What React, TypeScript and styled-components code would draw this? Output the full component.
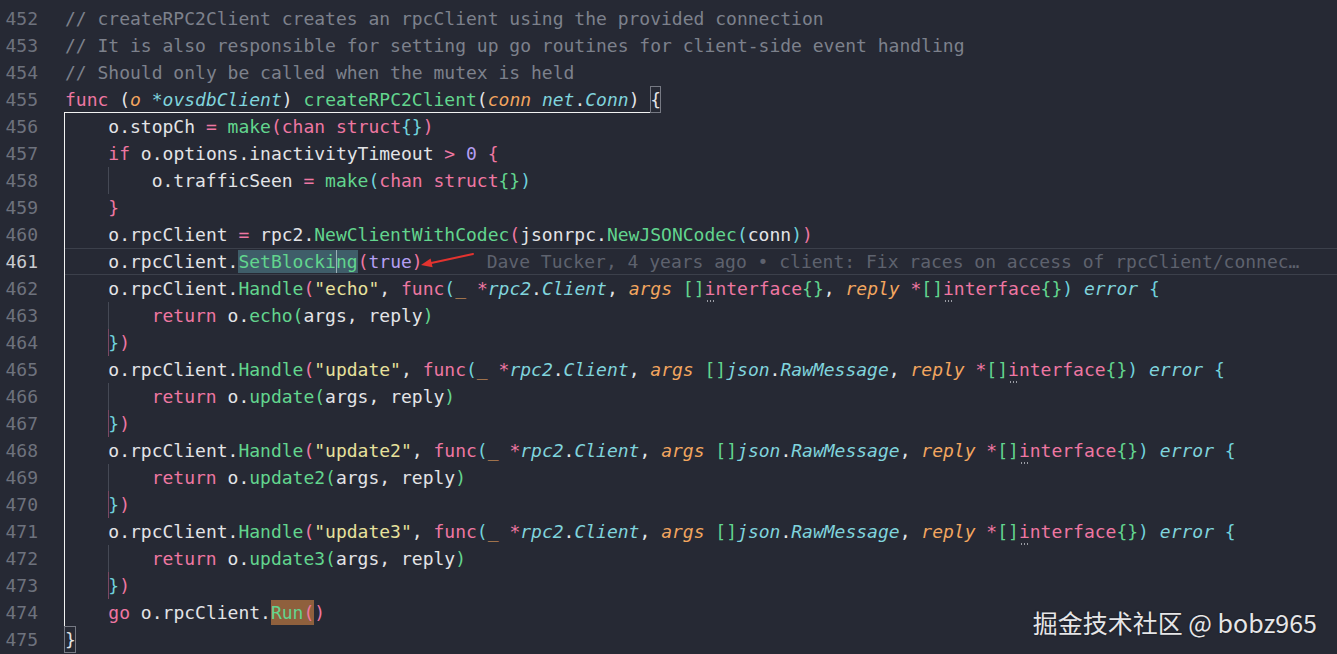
import React from "react";
import styled, { createGlobalStyle, css } from "styled-components";

const C = {
  bg: "#262934",
  text: "#e3e4e7",
  comment: "#7d818c",
  kw: "#ee77a2",
  fn: "#62d58e",
  param: "#f3a65f",
  type: "#80d4dd",
  str: "#e7e19c",
  num: "#b59ff2",
  b1: "#e3e4e7",
  b2: "#ee77a2",
  b3: "#70d2dc",
  b4: "#62d58e",
  lineNo: "#6e727d",
  lineNoActive: "#c9cbd0",
  guide: "#454955",
  guidePink: "#7a4862",
  rowBorder: "#3c404b",
  blame: "#5e626e",
};

type Kind = "t" | "c" | "k" | "f" | "p" | "y" | "s" | "n" | "b1" | "b2" | "b3" | "b4";

const GlobalStyle = createGlobalStyle`
  html, body { margin: 0; padding: 0; background: ${C.bg}; overflow: hidden; }
  #root { height: 100vh; }
`;

const Editor = styled.div`
  position: relative;
  height: 654px;
  padding-top: 5px;
  box-sizing: border-box;
  background: ${C.bg};
  font-family: "DejaVu Sans Mono", "Liberation Mono", monospace;
  font-size: 18px;
  color: ${C.text};
  display: flex;
  flex-direction: column;
`;

const Row = styled.div`
  display: grid;
  grid-template-columns: 64px 1fr;
  height: 27px;
  line-height: 27px;
`;

const Gutter = styled.div<{ $active?: boolean }>`
  text-align: right;
  padding-right: 26px;
  color: ${(p) => (p.$active ? C.lineNoActive : C.lineNo)};
`;

const Code = styled.div<{ $guide?: boolean; $current?: boolean }>`
  position: relative;
  white-space: pre;
  padding-left: 1px;
  ${(p) => {
    const shadows: string[] = [];
    if (p.$guide) shadows.push("inset 1px 0 0 #f2f2f2");
    if (p.$current) shadows.push(`inset 0 1px 0 ${C.rowBorder}`, `inset 0 -1px 0 ${C.rowBorder}`);
    return shadows.length ? css`box-shadow: ${shadows.join(", ")};` : "";
  }}
`;

const Indent = styled.span<{ $guide?: boolean }>`
  display: inline-block;
  width: 43.35px;
  height: 27px;
  vertical-align: top;
  ${(p) => p.$guide && css`box-shadow: inset 1px 0 0 ${C.guide};`}
`;

const CloseGuide = styled.span`
  display: inline-block;
  width: 0;
  height: 27px;
  vertical-align: top;
  border-left: 1px solid ${C.guidePink};
  margin-right: -1px;
`;

const colorOf = (k: Kind) =>
  ({
    t: C.text,
    c: C.comment,
    k: C.kw,
    f: C.fn,
    p: C.param,
    y: C.type,
    s: C.str,
    n: C.num,
    b1: C.b1,
    b2: C.b2,
    b3: C.b3,
    b4: C.b4,
  }[k]);

const Tok = styled.span<{ $k: Kind }>`
  color: ${(p) => colorOf(p.$k)};
  font-style: ${(p) => (p.$k === "p" || p.$k === "y" ? "italic" : "normal")};
`;

const Hint = styled.span`
  position: relative;
  &::after {
    content: "";
    position: absolute;
    left: 1px;
    bottom: -3px;
    width: 9px;
    height: 2px;
    background: radial-gradient(circle, #9a9ca4 0.8px, transparent 1px) 0 0 / 3px 2px repeat-x;
  }
`;

const Lead = styled.span`
  display: inline-block;
  margin-left: -1px;
  padding-left: 1px;
  height: 27px;
  vertical-align: top;
  box-shadow: inset 0 -1px 0 #f2f2f2;
`;

const BracketBox = styled.span<{ $shift?: boolean }>`
  display: inline-block;
  height: 27px;
  vertical-align: top;
  box-shadow: inset 0 0 0 1px #767983;
  ${(p) => p.$shift && css`margin-left: -1px; padding-left: 1px;`}
`;

const Selection = styled.span`
  display: inline-block;
  line-height: 23px;
  background: #3f5d69;
`;

const Caret = styled.span`
  display: inline-block;
  width: 0;
  height: 23px;
  vertical-align: top;
  border-left: 1px solid #9db0b8;
  margin-right: -1px;
`;

const MatchBox = styled.span`
  display: inline-block;
  line-height: 25px;
  background: #8f603d;
`;

const Blame = styled.span`
  margin-left: 64px;
  color: ${C.blame};
`;

const Arrow = styled.svg`
  position: absolute;
  left: 350px;
  top: 0;
  width: 130px;
  height: 27px;
  overflow: visible;
`;

const Watermark = styled.div`
  position: absolute;
  right: 20px;
  bottom: 17px;
  font-family: "Noto Sans CJK SC", "Noto Sans", sans-serif;
  font-size: 25px;
  line-height: 30px;
  color: #e6e6e8;
  text-shadow: 0 0 2px rgba(0, 0, 0, 0.5);
  white-space: pre;
`;

type T = [string, Kind, ("hint")?];

const t = (s: string): T => [s, "t"];

const Tokens: React.FC<{ items: T[] }> = ({ items }) => (
  <>
    {items.map(([s, k, x], i) =>
      x === "hint" ? (
        <Tok key={i} $k={k}>
          <Hint>{s[0]}</Hint>
          {s.slice(1)}
        </Tok>
      ) : (
        <Tok key={i} $k={k}>
          {s}
        </Tok>
      )
    )}
  </>
);

const handlerHead = (name: string, argsType: T[]): T[] => [
  t("o.rpcClient."),
  ["Handle", "f"],
  ["(", "b2"],
  [`"${name}"`, "s"],
  t(", "),
  ["func", "k"],
  ["(", "b3"],
  ["_", "p"],
  t(" "),
  ["*", "k"],
  ["rpc2", "y"],
  t("."),
  ["Client", "y"],
  t(", "),
  ["args", "p"],
  t(" "),
  ["[]", "b4"],
  ...argsType,
  t(", "),
  ["reply", "p"],
  t(" "),
  ["*", "k"],
  ["[]", "b4"],
  ["interface", "k", "hint"],
  ["{}", "b4"],
  [")", "b3"],
  t(" "),
  ["error", "y"],
  t(" "),
  ["{", "b3"],
];

const rawMsg: T[] = [["json", "y"], t("."), ["RawMessage", "y"]];
const ifaceArg: T[] = [["interface", "k", "hint"], ["{}", "b4"]];

const returnLine = (fn: string): T[] => [
  ["return", "k"],
  t(" o."),
  [fn, "f"],
  ["(", "b4"],
  t("args, reply"),
  [")", "b4"],
];

const closeLine: T[] = [
  ["}", "b3"],
  [")", "b2"],
];

type LineDef = {
  n: number;
  guide?: boolean;
  indent?: 0 | 1 | 2;
  close?: boolean;
  tokens?: T[];
  custom?: React.ReactNode;
};

const lines: LineDef[] = [
  { n: 452, tokens: [["// createRPC2Client creates an rpcClient using the provided connection", "c"]] },
  { n: 453, tokens: [["// It is also responsible for setting up go routines for client-side event handling", "c"]] },
  { n: 454, tokens: [["// Should only be called when the mutex is held", "c"]] },
  {
    n: 455,
    custom: (
      <>
        <Lead>
          <Tokens
            items={[
              ["func", "k"],
              t(" "),
              ["(", "b1"],
              ["o", "p"],
              t(" "),
              ["*ovsdbClient", "y"],
              [")", "b1"],
              t(" "),
              ["createRPC2Client", "f"],
              ["(", "b1"],
              ["conn", "p"],
              t(" "),
              ["net", "y"],
              t("."),
              ["Conn", "y"],
              [")", "b1"],
              t(" "),
            ]}
          />
        </Lead>
        <BracketBox>
          <Tok $k="b1">{"{"}</Tok>
        </BracketBox>
      </>
    ),
  },
  {
    n: 456,
    guide: true,
    indent: 1,
    tokens: [t("o.stopCh "), ["=", "k"], t(" "), ["make", "f"], ["(", "b2"], ["chan struct", "k"], ["{}", "b3"], [")", "b2"]],
  },
  {
    n: 457,
    guide: true,
    indent: 1,
    tokens: [["if", "k"], t(" o.options.inactivityTimeout "), [">", "k"], t(" "), ["0", "n"], t(" "), ["{", "b2"]],
  },
  {
    n: 458,
    guide: true,
    indent: 2,
    tokens: [t("o.trafficSeen "), ["=", "k"], t(" "), ["make", "f"], ["(", "b3"], ["chan struct", "k"], ["{}", "b4"], [")", "b3"]],
  },
  { n: 459, guide: true, indent: 1, tokens: [["}", "b2"]] },
  {
    n: 460,
    guide: true,
    indent: 1,
    tokens: [
      t("o.rpcClient "),
      ["=", "k"],
      t(" rpc2."),
      ["NewClientWithCodec", "f"],
      ["(", "b2"],
      t("jsonrpc."),
      ["NewJSONCodec", "f"],
      ["(", "b3"],
      t("conn"),
      [")", "b3"],
      [")", "b2"],
    ],
  },
  {
    n: 461,
    guide: true,
    indent: 1,
    custom: (
      <>
        <Tok $k="t">o.rpcClient.</Tok>
        <Selection>
          <Tok $k="f">SetBlocki</Tok>
          <Caret />
          <Tok $k="f">ng</Tok>
        </Selection>
        <Tok $k="b2">(</Tok>
        <Tok $k="n">true</Tok>
        <Tok $k="b2">)</Tok>
        <Blame>Dave Tucker, 4 years ago • client: Fix races on access of rpcClient/connec…</Blame>
        <Arrow viewBox="0 0 130 27">
          <line x1="59" y1="6" x2="15" y2="15.4" stroke="#e3332f" strokeWidth="2" strokeLinecap="round" />
          <polygon points="7,17 18.6,19.2 16.6,10.6" fill="#e3332f" />
        </Arrow>
      </>
    ),
  },
  { n: 462, guide: true, indent: 1, tokens: handlerHead("echo", ifaceArg) },
  { n: 463, guide: true, indent: 2, tokens: returnLine("echo") },
  { n: 464, guide: true, indent: 1, close: true, tokens: closeLine },
  { n: 465, guide: true, indent: 1, tokens: handlerHead("update", rawMsg) },
  { n: 466, guide: true, indent: 2, tokens: returnLine("update") },
  { n: 467, guide: true, indent: 1, close: true, tokens: closeLine },
  { n: 468, guide: true, indent: 1, tokens: handlerHead("update2", rawMsg) },
  { n: 469, guide: true, indent: 2, tokens: returnLine("update2") },
  { n: 470, guide: true, indent: 1, close: true, tokens: closeLine },
  { n: 471, guide: true, indent: 1, tokens: handlerHead("update3", rawMsg) },
  { n: 472, guide: true, indent: 2, tokens: returnLine("update3") },
  { n: 473, guide: true, indent: 1, close: true, tokens: closeLine },
  {
    n: 474,
    guide: true,
    indent: 1,
    custom: (
      <>
        <Tok $k="k">go</Tok>
        <Tok $k="t"> o.rpcClient.</Tok>
        <MatchBox>
          <Tok $k="f">Run</Tok>
          <Tok $k="b2">(</Tok>
        </MatchBox>
        <Tok $k="b2">)</Tok>
      </>
    ),
  },
  {
    n: 475,
    custom: (
      <BracketBox $shift>
        <Tok $k="b1">{"}"}</Tok>
      </BracketBox>
    ),
  },
];

export default function App() {
  return (
    <>
      <GlobalStyle />
      <Editor>
        {lines.map((l) => (
          <Row key={l.n}>
            <Gutter $active={l.n === 461}>{l.n}</Gutter>
            <Code $guide={l.guide} $current={l.n === 461}>
              {l.indent ? <Indent /> : null}
              {l.indent === 2 ? <Indent $guide /> : null}
              {l.close ? <CloseGuide /> : null}
              {l.custom ?? <Tokens items={l.tokens ?? []} />}
            </Code>
          </Row>
        ))}
        <Watermark>掘金技术社区 @ bobz965</Watermark>
      </Editor>
    </>
  );
}
